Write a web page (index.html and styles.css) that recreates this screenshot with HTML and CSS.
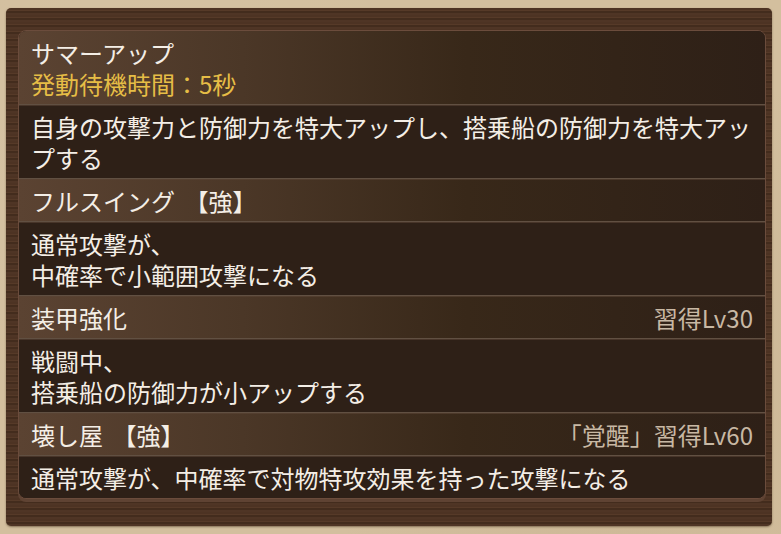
FILE: index.html
```html
<!DOCTYPE html>
<html lang="ja">
<head>
<meta charset="utf-8">
<title>スキル</title>
<link rel="stylesheet" href="styles.css">
</head>
<body>
<div class="frame">
  <div class="panel">
    <div class="row head">
      <div class="line">サマーアップ</div>
      <div class="line gold">発動待機時間：5秒</div>
    </div>
    <div class="row desc">自身の攻撃力と防御力を特大アップし、搭乗船の防御力を特大アップする</div>
    <div class="row head split">
      <span>フルスイング <span class="tag">【強】</span></span>
    </div>
    <div class="row desc">通常攻撃が、<br>中確率で小範囲攻撃になる</div>
    <div class="row head split">
      <span>装甲強化</span>
      <span class="req">習得Lv30</span>
    </div>
    <div class="row desc">戦闘中、<br>搭乗船の防御力が小アップする</div>
    <div class="row head split">
      <span>壊し屋 <span class="tag">【強】</span></span>
      <span class="req">「覚醒」習得Lv60</span>
    </div>
    <div class="row desc">通常攻撃が、中確率で対物特攻効果を持った攻撃になる</div>
  </div>
</div>
</body>
</html>
```
FILE: styles.css
```css
html, body {
  margin: 0;
  padding: 0;
}
body {
  width: 781px;
  height: 534px;
  overflow: hidden;
  background-color: #d3bf9e;
  background-image:
    radial-gradient(circle at 20% 30%, rgba(255,255,255,0.08), transparent 40%),
    radial-gradient(circle at 80% 70%, rgba(120,90,50,0.10), transparent 45%);
  font-family: "Noto Sans CJK JP", "Noto Sans", sans-serif;
  padding: 8px 9px 8px 6px;
  box-sizing: border-box;
}
.frame {
  height: 518px;
  box-sizing: border-box;
  border-radius: 5px;
  padding: 22px 6px 0 12px;
  background-color: #4a3121;
  background-image: repeating-linear-gradient(
    180deg,
    #4d3323 0px, #4d3323 2px,
    #563a28 2px, #563a28 3px,
    #432c1d 3px, #432c1d 5px,
    #4f3525 5px, #4f3525 7px
  );
  box-shadow: 0 1px 2px rgba(60, 40, 20, 0.5);
}
.panel {
  border: 1px solid #6b4c3c;
  border-radius: 8px;
  overflow: hidden;
  background: #2e2017;
  box-shadow: 0 3px 0 #5f4333;
}
.row {
  padding: 6px 12px 5px 12px;
  line-height: 31px;
  font-size: 24px;
  color: #f4eee6;
  border-top: 1px solid #615042;
  box-shadow: inset 0 1px 0 rgba(90, 68, 54, 0.6);
}
.row:first-child {
  border-top: none;
  box-shadow: none;
}
.head {
  background: linear-gradient(90deg, #5b4332 0%, #4b3727 30%, #382819 60%, #2e2017 100%);
}
.desc {
  background: #2e2017;
}
.split {
  display: flex;
  justify-content: space-between;
}
.tag {
  margin-left: 4px;
}
.gold {
  color: #e6bd46;
}
.req {
  color: #c8b8a4;
}
```
